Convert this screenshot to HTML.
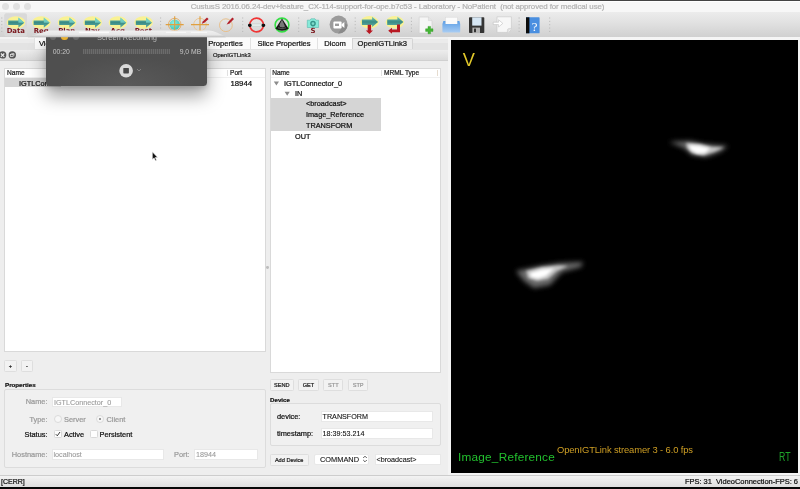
<!DOCTYPE html>
<html><head><meta charset="utf-8"><title>CustusS</title>
<style>
*{box-sizing:border-box;margin:0;padding:0}
html,body{width:800px;height:489px;overflow:hidden;background:#eeeeee}
body{position:relative;will-change:transform;-webkit-text-stroke:.22px;-webkit-font-smoothing:antialiased;font-family:"Liberation Sans",sans-serif;font-size:7.5px;color:#111;line-height:1}
.a{position:absolute;white-space:nowrap}
#title{left:0;top:0;width:800px;height:12px;background:linear-gradient(#fff 0,#fff 1px,#f7f7f7 1.5px);border-top:1px solid #444}
#title .t{left:0;width:795px;top:1.8px;text-align:center;font-size:7.9px;letter-spacing:-0.095px;color:#b2b2b2}
.tl{width:7px;height:7px;border-radius:50%;background:#e1e1e1;top:2px}
#toolbar{left:0;top:12px;width:800px;height:25px;background:linear-gradient(#ececec,#e2e2e2 40%,#d0d0d0)}
#tabs{left:0;top:37px;width:451px;height:13px;background:linear-gradient(#f2f2f2 0,#f2f2f2 12%,#ebebeb 12%,#ebebeb 50%,#e3e3e3 50%,#e3e3e3 100%)}
.tab{top:38.3px;height:10.4px;background:#fbfbfb;border-left:1px solid #e2e2e2;font-size:7.6px;text-align:center;padding-top:1.5px;color:#111}
#dock{left:0;top:49.5px;width:448px;height:11.5px;background:linear-gradient(#ededed,#dbdbdb);border-bottom:1px solid #d0d0d0}
.white{background:#fff;border:1px solid #d9d9d9}
.hdr{font-size:6.6px;color:#222}
.row{font-size:7.3px;color:#111}
.btn{background:#f2f2f2;border:1px solid #dedede;border-radius:1.5px;font-size:5.6px;text-align:center;color:#222}
.grp{border:1px solid #dcdcdc;border-radius:2px;background:#f0f0f0}
.bold{font-weight:bold;font-size:6.2px;color:#111}
.lbl{font-size:7.4px}
.dis{color:#9a9a9a}
.fld{-webkit-text-stroke:.1px;background:#fff;border:1px solid #e8e8e8;font-size:7.2px;padding:1.4px 1px}
.rad{width:8px;height:8px;border-radius:50%;background:#f7f7f7;border:1px solid #dbdbdb}
.rad i{position:absolute;left:2px;top:2px;width:2px;height:2px;border-radius:50%;background:#777}
.chk{width:8px;height:8px;border-radius:1.5px;background:#fdfdfd;border:1px solid #d8d8d8}
.chk svg{position:absolute;left:-1px;top:-1px}
#view{left:451px;top:40px;width:347px;height:433px;background:#000}
#status{left:0;top:475px;width:800px;height:12px;background:linear-gradient(#f3f3f3,#dedede);border-top:1px solid #cdcdcd}
#bottom{left:0;top:487px;width:800px;height:2px;background:#060606}
#rec{-webkit-text-stroke:0;left:46.2px;top:37px;width:160.7px;height:49px;overflow:hidden;background:radial-gradient(ellipse 70px 30px at 50% 100%,#5a5a5a,#4f4f4f);border-radius:0 0 3.5px 3.5px;box-shadow:0 10px 18px rgba(0,0,0,.38),0 2px 5px rgba(0,0,0,.15)}
</style></head><body>

<div id="title" class="a">
 <div class="a tl" style="left:1.7px"></div><div class="a tl" style="left:12.7px"></div><div class="a tl" style="left:23.7px"></div>
 <div class="a t">CustusS 2016.06.24-dev+feature_CX-114-support-for-ope.b7c53 - Laboratory - NoPatient&nbsp; (not approved for medical use)</div>
</div>
<div id="toolbar" class="a"></div>
<svg class="a" style="left:0;top:12px" width="800" height="26" viewBox="0 12 800 26">
<defs>
<linearGradient id="tg" x1="0" y1="0" x2="0" y2="1"><stop offset="0" stop-color="#74c8be"/><stop offset=".5" stop-color="#3a8a84"/><stop offset="1" stop-color="#62b4aa"/></linearGradient>
<linearGradient id="pb" x1="0" y1="0" x2="0" y2="1"><stop offset="0" stop-color="#5d9fe6"/><stop offset="1" stop-color="#a9cdf3"/></linearGradient>
<radialGradient id="sph" cx=".4" cy=".35" r=".7"><stop offset="0" stop-color="#8ff0e2"/><stop offset="1" stop-color="#3fc4b4"/></radialGradient>
</defs>
<rect x="4.2" y="13.3" width="22.8" height="23" rx="2" fill="#d9d9d9"/>
<rect x="1.3" y="17.50" width="1" height="1" fill="#b4b4b4"/><rect x="1.3" y="20.85" width="1" height="1" fill="#b4b4b4"/><rect x="1.3" y="24.20" width="1" height="1" fill="#b4b4b4"/><rect x="1.3" y="27.55" width="1" height="1" fill="#b4b4b4"/><rect x="1.3" y="30.90" width="1" height="1" fill="#b4b4b4"/><g transform="translate(0,0)">
<ellipse cx="16" cy="22.5" rx="9.3" ry="6.3" fill="#f9f294"/>
<path d="M8.2 20.4 H18.4 V17.4 L24.3 22.7 L18.4 27.8 V25 H8.2 Z" fill="url(#tg)"/>
<path d="M18.4 17.4 L24.3 22.7 L18.4 22.7 Z" fill="#7fe0d4" opacity=".7"/>
<text x="15.8" y="33.3" text-anchor="middle" font-family="'DejaVu Sans',sans-serif" font-weight="bold" font-size="6.9" fill="#7a151b">Data</text>
</g><g transform="translate(25.4,0)">
<ellipse cx="16" cy="22.5" rx="9.3" ry="6.3" fill="#f9f294"/>
<path d="M8.2 20.4 H18.4 V17.4 L24.3 22.7 L18.4 27.8 V25 H8.2 Z" fill="url(#tg)"/>
<path d="M18.4 17.4 L24.3 22.7 L18.4 22.7 Z" fill="#7fe0d4" opacity=".7"/>
<text x="15.8" y="33.3" text-anchor="middle" font-family="'DejaVu Sans',sans-serif" font-weight="bold" font-size="6.9" fill="#7a151b">Reg</text>
</g><g transform="translate(51,0)">
<ellipse cx="16" cy="22.5" rx="9.3" ry="6.3" fill="#f9f294"/>
<path d="M8.2 20.4 H18.4 V17.4 L24.3 22.7 L18.4 27.8 V25 H8.2 Z" fill="url(#tg)"/>
<path d="M18.4 17.4 L24.3 22.7 L18.4 22.7 Z" fill="#7fe0d4" opacity=".7"/>
<text x="15.8" y="33.3" text-anchor="middle" font-family="'DejaVu Sans',sans-serif" font-weight="bold" font-size="6.9" fill="#7a151b">Plan</text>
</g><g transform="translate(76.6,0)">
<ellipse cx="16" cy="22.5" rx="9.3" ry="6.3" fill="#f9f294"/>
<path d="M8.2 20.4 H18.4 V17.4 L24.3 22.7 L18.4 27.8 V25 H8.2 Z" fill="url(#tg)"/>
<path d="M18.4 17.4 L24.3 22.7 L18.4 22.7 Z" fill="#7fe0d4" opacity=".7"/>
<text x="15.8" y="33.3" text-anchor="middle" font-family="'DejaVu Sans',sans-serif" font-weight="bold" font-size="6.9" fill="#7a151b">Nav</text>
</g><g transform="translate(102,0)">
<ellipse cx="16" cy="22.5" rx="9.3" ry="6.3" fill="#f9f294"/>
<path d="M8.2 20.4 H18.4 V17.4 L24.3 22.7 L18.4 27.8 V25 H8.2 Z" fill="url(#tg)"/>
<path d="M18.4 17.4 L24.3 22.7 L18.4 22.7 Z" fill="#7fe0d4" opacity=".7"/>
<text x="15.8" y="33.3" text-anchor="middle" font-family="'DejaVu Sans',sans-serif" font-weight="bold" font-size="6.9" fill="#7a151b">Acq</text>
</g><g transform="translate(127.6,0)">
<ellipse cx="16" cy="22.5" rx="9.3" ry="6.3" fill="#f9f294"/>
<path d="M8.2 20.4 H18.4 V17.4 L24.3 22.7 L18.4 27.8 V25 H8.2 Z" fill="url(#tg)"/>
<path d="M18.4 17.4 L24.3 22.7 L18.4 22.7 Z" fill="#7fe0d4" opacity=".7"/>
<text x="15.8" y="33.3" text-anchor="middle" font-family="'DejaVu Sans',sans-serif" font-weight="bold" font-size="6.9" fill="#7a151b">Post</text>
</g><rect x="160.1" y="17.50" width="1" height="1" fill="#b4b4b4"/><rect x="160.1" y="20.85" width="1" height="1" fill="#b4b4b4"/><rect x="160.1" y="24.20" width="1" height="1" fill="#b4b4b4"/><rect x="160.1" y="27.55" width="1" height="1" fill="#b4b4b4"/><circle cx="174.7" cy="24.6" r="5.2" fill="url(#sph)"/>
<circle cx="174.7" cy="24.6" r="6.3" fill="none" stroke="#e2b070" stroke-width="1"/>
<path d="M165.7 24.6 H183.7 M174.7 16.2 V33.5" stroke="#e0a040" stroke-width="1.1"/>
<circle cx="200" cy="24.6" r="6.3" fill="none" stroke="#ecc898" stroke-width="1"/>
<path d="M191 24.6 H209 M200 16.2 V33.5" stroke="#e0a040" stroke-width="1.1"/>
<path d="M201.6 23.8 L203 21.2 L207 17.4 L208.6 18.9 L204.4 22.8 Z" fill="#b3202a"/>
<circle cx="225.9" cy="25.2" r="6.4" fill="none" stroke="#e8c08c" stroke-width="1"/>
<path d="M226.6 24.6 L228.2 21.9 L232.4 17.6 L234 19.1 L229.6 23.4 Z" fill="#b3202a"/>
<rect x="242.2" y="17.50" width="1" height="1" fill="#b4b4b4"/><rect x="242.2" y="20.85" width="1" height="1" fill="#b4b4b4"/><rect x="242.2" y="24.20" width="1" height="1" fill="#b4b4b4"/><rect x="242.2" y="27.55" width="1" height="1" fill="#b4b4b4"/><rect x="242.2" y="30.90" width="1" height="1" fill="#b4b4b4"/><circle cx="256.6" cy="25" r="6.9" fill="none" stroke="#f03434" stroke-width="1.6"/>
<rect x="251" y="23.9" width="11" height="2.8" fill="#e4ebe9" stroke="#b9c2c0" stroke-width=".4"/>
<rect x="248" y="23.7" width="3.6" height="3.2" rx="1.4" fill="#111"/>
<rect x="261.6" y="23.7" width="3.6" height="3.2" rx="1.4" fill="#111"/>
<circle cx="282" cy="25" r="6.9" fill="#dcdcdc" stroke="#35e045" stroke-width="1.6"/>
<path d="M282 18.4 L288.6 28.8 Q282 32.6 275.4 28.8 Z" fill="#161616"/>
<path d="M282 19.6 L285 26.4 L283 27.4 L280 27 L279.4 25 Z" fill="#9a9a9a" opacity=".75"/>
<path d="M278 27.8 Q282 29.6 286 27.8" stroke="#777" stroke-width=".7" fill="none"/>
<rect x="298.2" y="17.50" width="1" height="1" fill="#b4b4b4"/><rect x="298.2" y="20.85" width="1" height="1" fill="#b4b4b4"/><rect x="298.2" y="24.20" width="1" height="1" fill="#b4b4b4"/><rect x="298.2" y="27.55" width="1" height="1" fill="#b4b4b4"/><rect x="298.2" y="30.90" width="1" height="1" fill="#b4b4b4"/><path d="M307.3 20.2 H310 L311 18.8 H315 L316 20.2 H318.6 V27.5 H307.3 Z" fill="#86ead9" stroke="#58b8ac" stroke-width=".6"/>
<circle cx="313" cy="23.6" r="2.1" fill="#7fdccd" stroke="#35958a" stroke-width="1.4"/>
<text x="313" y="33.2" text-anchor="middle" font-family="'DejaVu Sans',sans-serif" font-weight="bold" font-size="7" fill="#7a151b">S</text>
<circle cx="338.6" cy="24.6" r="9" fill="#9b9b9b"/>
<path d="M338 33.6 A9 9 0 0 0 347.6 25 L344 22.4 L341 29 Z" fill="#8a8a8a"/>
<rect x="333.4" y="21.6" width="8.2" height="6.8" rx="1" fill="#fff"/>
<path d="M341.6 24.2 L344.4 22 V28 L341.6 25.8 Z" fill="#fff"/>
<rect x="335" y="23.6" width="4" height="2.4" fill="#9b9b9b"/>
<rect x="354.7" y="17.50" width="1" height="1" fill="#b4b4b4"/><rect x="354.7" y="20.85" width="1" height="1" fill="#b4b4b4"/><rect x="354.7" y="24.20" width="1" height="1" fill="#b4b4b4"/><rect x="354.7" y="27.55" width="1" height="1" fill="#b4b4b4"/><rect x="354.7" y="30.90" width="1" height="1" fill="#b4b4b4"/><g transform="translate(353.5,0)"><ellipse cx="16" cy="22.3" rx="9.2" ry="6.2" fill="#f9f294"/>
<path d="M8.4 19.6 H18.6 V16.8 L24.6 22 L18.6 27 V24.9 H8.4 Z" fill="url(#tg)"/></g><g transform="translate(378.8,0)"><ellipse cx="16" cy="22.3" rx="9.2" ry="6.2" fill="#f9f294"/>
<path d="M8.4 19.6 H18.6 V16.8 L24.6 22 L18.6 27 V24.9 H8.4 Z" fill="url(#tg)"/></g><path d="M367.7 24.8 H371.1 V30.4 H373 L369.4 34 L365.8 30.4 H367.7 Z" fill="#b81822"/>
<path d="M397 24.6 H400 V32.2 H392 V33.8 L388.2 30.8 L392 27.8 V29.4 H397 Z" fill="#b81822"/>
<rect x="410.9" y="17.50" width="1" height="1" fill="#b4b4b4"/><rect x="410.9" y="20.85" width="1" height="1" fill="#b4b4b4"/><rect x="410.9" y="24.20" width="1" height="1" fill="#b4b4b4"/><rect x="410.9" y="27.55" width="1" height="1" fill="#b4b4b4"/><rect x="410.9" y="30.90" width="1" height="1" fill="#b4b4b4"/><path d="M419.2 17 H428.4 L432 20.6 V33 H419.2 Z" fill="#f6f6f6" stroke="#cfcfcf" stroke-width=".6"/>
<path d="M428.4 17 V20.6 H432" fill="#e4e4e4" stroke="#cfcfcf" stroke-width=".5"/>
<path d="M428 26.4 H430.6 V28.8 H433 V31.4 H430.6 V33.8 H428 V31.4 H425.6 V28.8 H428 Z" fill="#45b535" stroke="#2f9a25" stroke-width=".4"/>
<rect x="445.4" y="17.2" width="12" height="8" fill="#fbfbfb" stroke="#d8d8d8" stroke-width=".5"/>
<path d="M443.4 21 H445.4 V24 H457.4 V21 H459.4 L460.2 24 V31.4 Q460.2 32.6 459 32.6 H443.6 Q442.4 32.6 442.4 31.4 V24 Z" fill="url(#pb)"/>
<rect x="469" y="17.3" width="15.3" height="15.8" rx=".8" fill="#353535"/>
<rect x="472.2" y="17.3" width="9.3" height="8.3" fill="#d6e6f3"/>
<rect x="472.4" y="27.6" width="7.6" height="5.5" fill="#b4b4b4"/>
<rect x="474" y="28.6" width="2" height="3.6" fill="#333"/>
<path d="M497 16.8 H511.4 V28.4 Q511 32 507.4 32.4 H497 Z" fill="#f7f7f7" stroke="#c4c4c4" stroke-width=".6"/>
<path d="M511.4 28.4 Q508.6 28.2 507.8 29 Q507.2 30 507.4 32.4" fill="#e2e2e2" stroke="#c4c4c4" stroke-width=".5"/>
<path d="M493.2 22.2 H498.6 V19.8 L502.8 23.4 L498.6 27 V24.6 H493.2 Z" fill="#fff" stroke="#c0c0c0" stroke-width=".6"/>
<rect x="518.6" y="17.50" width="1" height="1" fill="#b4b4b4"/><rect x="518.6" y="20.85" width="1" height="1" fill="#b4b4b4"/><rect x="518.6" y="24.20" width="1" height="1" fill="#b4b4b4"/><rect x="518.6" y="27.55" width="1" height="1" fill="#b4b4b4"/><rect x="518.6" y="30.90" width="1" height="1" fill="#b4b4b4"/><rect x="526" y="17.3" width="13.6" height="16" rx=".6" fill="#4a8fe0"/>
<rect x="526" y="17.3" width="3.4" height="16" fill="#0c0c0c"/>
<text x="534.6" y="30.6" text-anchor="middle" font-family="'Liberation Serif',serif" font-size="13" fill="#fff">?</text>
<rect x="549.2" y="17.50" width="1" height="1" fill="#b4b4b4"/><rect x="549.2" y="20.85" width="1" height="1" fill="#b4b4b4"/><rect x="549.2" y="24.20" width="1" height="1" fill="#b4b4b4"/><rect x="549.2" y="27.55" width="1" height="1" fill="#b4b4b4"/><rect x="549.2" y="30.90" width="1" height="1" fill="#b4b4b4"/></svg>
<div id="tabs" class="a"></div>
<div class="a tab" style="left:33.5px;width:30px;text-align:left;padding-left:4.4px">View</div>
<div class="a tab" style="left:200px;width:50px">Properties</div>
<div class="a tab" style="left:250px;width:67px">Slice Properties</div>
<div class="a tab" style="left:317px;width:35px">Dicom</div>
<div class="a tab" style="left:352px;width:60.5px;background:#ececec;border:1px solid #d4d4d4;border-bottom:none;border-radius:0 2px 0 0;padding-top:.5px">OpenIGTLink3</div>
<div id="dock" class="a"><div class="a" style="left:213px;top:3.4px;font-size:5.8px;color:#222">OpenIGTLink3</div></div>

<svg class="a" style="left:0;top:50px" width="20" height="10" viewBox="0 50 20 10">
<circle cx="2.6" cy="54.9" r="3.7" fill="#555"/><path d="M0.9 53.5 L4.3 56.9 M4.3 53.5 L0.9 56.9" stroke="#eee" stroke-width="1.1"/>
<circle cx="12.3" cy="54.9" r="3.7" fill="#555"/><rect x="10.3" y="54.4" width="2.8" height="2.2" fill="none" stroke="#eee" stroke-width=".7"/><path d="M11.3 53.6 H14 V55.6" fill="none" stroke="#eee" stroke-width=".7"/>
</svg>
<!-- left list -->
<div class="a white" style="left:4px;top:68px;width:262px;height:284px"></div>
<div class="a hdr" style="left:7px;top:70px">Name</div>
<div class="a hdr" style="left:230px;top:70px">Port</div>
<div class="a" style="left:5px;top:78.2px;width:56px;height:9.3px;background:#d6d6d6"></div>
<div class="a row" style="left:19px;top:79.5px;width:30px;height:7px;overflow:hidden">IGTLConnector_0</div>
<div class="a row" style="left:230.4px;top:79.9px;font-size:7.8px">18944</div>
<div class="a btn" style="left:4.2px;top:360.3px;width:12.6px;height:12.2px;padding-top:2.8px">+</div>
<div class="a btn" style="left:21.2px;top:360.3px;width:11.6px;height:12.2px;padding-top:2.8px">-</div>
<div class="a bold" style="left:5px;top:382px">Properties</div>
<div class="a grp" style="left:4px;top:388.5px;width:262px;height:79.5px"></div>

<!-- right tree -->
<div class="a white" style="left:269.5px;top:68px;width:171.5px;height:305px"></div>
<div class="a hdr" style="left:272.2px;top:70px">Name</div>
<div class="a hdr" style="left:384px;top:70px">MRML Type</div>
<div class="a" style="left:270.5px;top:98.2px;width:110.5px;height:33px;background:#d5d5d5"></div>
<div class="a row" style="left:284px;top:80px">IGTLConnector_0</div>
<div class="a row" style="left:295px;top:90px">IN</div>
<div class="a row" style="left:306px;top:100.4px">&lt;broadcast&gt;</div>
<div class="a row" style="left:306px;top:111.4px">Image_Reference</div>
<div class="a row" style="left:306px;top:122.4px">TRANSFORM</div>
<div class="a row" style="left:295px;top:133px">OUT</div>


<!-- left form -->
<div class="a lbl dis" style="left:0;width:47.5px;text-align:right;top:398px">Name:</div>
<div class="a fld dis" style="left:52px;top:396.5px;width:70px;height:10.5px">IGTLConnector_0</div>
<div class="a lbl dis" style="left:0;width:47.5px;text-align:right;top:415.5px">Type:</div>
<div class="a rad" style="left:54px;top:415px"></div>
<div class="a lbl dis" style="left:64px;top:415.5px">Server</div>
<div class="a rad" style="left:95.5px;top:415px"><i></i></div>
<div class="a lbl dis" style="left:106.5px;top:415.5px">Client</div>
<div class="a lbl" style="left:0;width:47.5px;text-align:right;top:430.5px">Status:</div>
<div class="a chk" style="left:54px;top:430px"><svg width="8" height="8" viewBox="0 0 8 8"><path d="M1.8 4.2 L3.3 5.8 L6 2" fill="none" stroke="#222" stroke-width="0.9"/></svg></div>
<div class="a lbl" style="left:64px;top:430.5px">Active</div>
<div class="a chk" style="left:90px;top:430px"></div>
<div class="a lbl" style="left:99.5px;top:430.5px">Persistent</div>
<div class="a lbl dis" style="left:0;width:47.5px;text-align:right;top:451px">Hostname:</div>
<div class="a fld dis" style="left:51.5px;top:449px;width:112px;height:10.5px">localhost</div>
<div class="a lbl dis" style="left:174px;top:451px">Port:</div>
<div class="a fld dis" style="left:194px;top:449px;width:64px;height:10.5px">18944</div>

<!-- right form -->
<div class="a btn" style="left:269.5px;top:378.5px;width:24.5px;height:12.5px;padding-top:3.3px">SEND</div>
<div class="a btn" style="left:298px;top:378.5px;width:21px;height:12.5px;padding-top:3.3px">GET</div>
<div class="a btn dis" style="left:323.2px;top:378.5px;width:20.3px;height:12.5px;padding-top:3.3px">STT</div>
<div class="a btn dis" style="left:348px;top:378.5px;width:20.3px;height:12.5px;padding-top:3.3px">STP</div>
<div class="a bold" style="left:270px;top:396.5px">Device</div>
<div class="a grp" style="left:269.5px;top:403px;width:171px;height:43px"></div>
<div class="a lbl" style="left:277px;top:412.5px">device:</div>
<div class="a fld" style="left:320.5px;top:411px;width:112.5px;height:10.5px">TRANSFORM</div>
<div class="a lbl" style="left:277px;top:429.5px">timestamp:</div>
<div class="a fld" style="left:320.5px;top:428px;width:112.5px;height:10.5px">18:39:53.214</div>
<div class="a btn" style="left:269.7px;top:453.5px;width:39px;height:12px;padding-top:3.2px">Add Device</div>
<div class="a fld" style="left:314px;top:453.5px;width:55px;height:11px;border-radius:2px;padding-left:5px;font-size:7.4px;padding-top:1.4px">COMMAND</div>
<svg class="a" style="left:362px;top:455px" width="6" height="8" viewBox="0 0 6 8"><path d="M1.2 3 L3 1.2 L4.8 3 M1.2 5 L3 6.8 L4.8 5" fill="none" stroke="#333" stroke-width="0.8"/></svg>
<div class="a fld" style="left:374.5px;top:453.5px;width:66px;height:11px;padding-top:1.8px;font-size:7.2px">&lt;broadcast&gt;</div>
<div class="a" style="left:448px;top:38px;width:3px;height:437px;background:#f4f4f4"></div>
<div class="a" style="left:448px;top:37px;width:352px;height:3px;background:#f5f5f5"></div>
<div class="a" style="left:798px;top:38px;width:2px;height:437px;background:#f4f4f4"></div>
<div class="a" style="left:451px;top:473px;width:349px;height:2px;background:#f4f4f4"></div>
<div class="a" style="left:5px;top:76.8px;width:260px;height:1px;background:#f0f0f0"></div>
<div class="a" style="left:271px;top:76.8px;width:169px;height:1px;background:#f0f0f0"></div>
<div class="a" style="left:227px;top:70px;width:1px;height:6px;background:#e0e0e0"></div>
<div class="a" style="left:381px;top:70px;width:1px;height:6px;background:#e0e0e0"></div>
<div class="a" style="left:437px;top:70px;width:1px;height:6px;background:#e6dccf"></div>
<div id="view" class="a">
<svg class="a" style="left:0;top:0" width="347" height="433" viewBox="451 40 347 433">
<defs><filter id="bl" x="-50%" y="-50%" width="200%" height="200%"><feGaussianBlur stdDeviation="1.8"/></filter>
<filter id="bl2" x="-50%" y="-50%" width="200%" height="200%"><feGaussianBlur stdDeviation="2.6"/></filter></defs>
<g filter="url(#bl2)" fill="#6a6a6a">
<path d="M669 142 L690 141 L704 144 L728 146 L720 152 L706 157 L692 155 L684 148 Z"/>
<path d="M516 271 L540 266 L560 263 L583 262 L581 267 L562 272 L550 285 L534 288 L524 281 Z"/>
</g>
<g filter="url(#bl)" fill="#c4c4c4">
<path d="M686 143 L700 144 L712 147 L724 147.5 L714 152 L703 155.5 L692 153 L687 148 Z"/>
<path d="M526 271 L542 267 L558 265.5 L568 266 L557 271 L548 279 L537 281 L528 278 Z"/>
</g>
<g filter="url(#bl)" fill="#fff">
<path d="M689 145 L700 146 L710 148.5 L705 153 L697 153.5 L691 150 Z"/>
<path d="M530 273 L542 269.5 L554 268.5 L546 276 L538 278.5 L531 277 Z"/>
</g>
<text x="462.8" y="66.1" font-family="'Liberation Sans',sans-serif" font-size="18.2" fill="#e2c92a">V</text>
<text x="458" y="460.8" font-family="'Liberation Sans',sans-serif" font-size="11.8" fill="#22c02e" textLength="96.8" lengthAdjust="spacing">Image_Reference</text>
<text x="557" y="453.4" font-family="'Liberation Sans',sans-serif" font-size="9.4" fill="#cf9f24" textLength="136" lengthAdjust="spacing">OpenIGTLink streamer 3 - 6.0 fps</text>
<text x="779" y="460.8" font-family="'Liberation Sans',sans-serif" font-size="12" fill="#1fa42b" textLength="11.5" lengthAdjust="spacingAndGlyphs">RT</text>
</svg></div>
<svg class="a" style="left:272px;top:80px" width="20" height="20" viewBox="272 80 20 20">
<path d="M273.8 81.6 H279 L276.4 85.6 Z M284.6 91.8 H289.8 L287.2 95.8 Z" fill="#8c8c8c"/></svg>
<svg class="a" style="left:150.6px;top:151px" width="8.2" height="11.5" viewBox="0 0 10 14"><path d="M1.6 1 V10.4 L3.8 8.4 L5.4 12 L6.8 11.4 L5.2 7.9 H8.2 Z" fill="#111" stroke="#fff" stroke-width=".7" stroke-linejoin="round"/></svg>
<div class="a" style="left:266px;top:266.3px;width:2.8px;height:2.8px;border-radius:50%;background:#bdbdbd"></div>
<div id="status" class="a">
 <div class="a" style="left:1px;top:1.8px;font-size:7px">[CERR]</div>
 <div class="a" style="right:2px;top:2px;font-size:7.5px;letter-spacing:-.02px">FPS: 31&nbsp; VideoConnection-FPS: 6</div>
</div>
<div id="bottom" class="a"></div>
<div id="rec" class="a">
 <div class="a" style="left:50.8px;top:-3.2px;font-size:7.5px;color:#b9b9b9">Screen Recording</div>
 <div class="a" style="left:3.6px;top:-3.2px;width:6.4px;height:6.4px;border-radius:50%;background:#6a6a6a"></div>
 <div class="a" style="left:15px;top:-3.2px;width:6.4px;height:6.4px;border-radius:50%;background:#e9b02c"></div>
 <div class="a" style="left:26.8px;top:-3.2px;width:6.4px;height:6.4px;border-radius:50%;background:#6a6a6a"></div>
 <div class="a" style="left:6.5px;top:12.3px;font-size:6.8px;color:#c6c6c6">00:20</div>
 <div class="a" style="left:36.5px;top:12.1px;width:87px;height:5px;background:repeating-linear-gradient(90deg,#6b6b6b 0,#6b6b6b 1.4px,#585858 1.4px,#585858 2px)"></div>
 <div class="a" style="left:133.5px;top:12.3px;font-size:6.8px;color:#c6c6c6">9,0 MB</div>
 <svg class="a" style="left:70px;top:24.5px" width="20" height="18" viewBox="0 0 20 18"><circle cx="10.1" cy="8.7" r="6.8" fill="#dadada"/><rect x="7.3" y="5.9" width="5.6" height="5.6" rx=".7" fill="#484848"/></svg>
 <svg class="a" style="left:90px;top:30.5px" width="6" height="4" viewBox="0 0 6 4"><path d="M1 1 L3 3 L5 1" fill="none" stroke="#8e8e8e" stroke-width=".8"/></svg>
</div>
<svg class="a" style="left:20px;top:28px" width="215" height="12" viewBox="20 28 215 12">
 <defs><linearGradient id="sg" x1="0" y1="0" x2="0" y2="1"><stop offset="0" stop-color="#f1f1f1"/><stop offset=".65" stop-color="#e6e6e6"/><stop offset="1" stop-color="#b9b9b9"/></linearGradient>
 <filter id="b1"><feGaussianBlur stdDeviation=".6"/></filter></defs>
 <path d="M27.5 37.3 L48.5 30.4 H209 Q216 30.8 226 37.3 Z" fill="url(#sg)"/>
 <rect x="79" y="31.6" width="30" height="1.6" fill="#fff" opacity=".8" filter="url(#b1)"/>
 <rect x="166" y="31.8" width="20" height="1.2" fill="#fff" opacity=".6" filter="url(#b1)"/>
 <rect x="191" y="31.8" width="16" height="1.2" fill="#fff" opacity=".6" filter="url(#b1)"/>
</svg>
</body></html>
